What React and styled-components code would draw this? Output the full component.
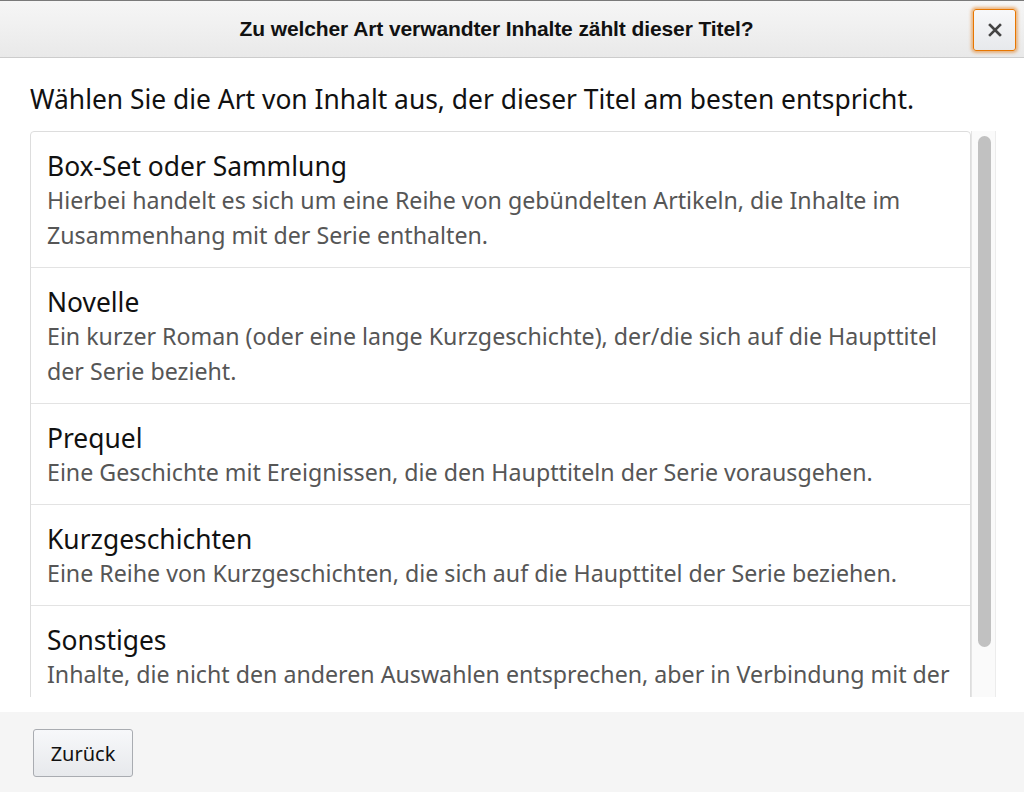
import React from "react";
import styled, { createGlobalStyle } from "styled-components";

const Global = createGlobalStyle`
  html, body { margin: 0; padding: 0; background: #fff; }
  body { font-family: "Noto Sans", "Liberation Sans", sans-serif; color: #111; }
  * { box-sizing: border-box; }
`;

const Page = styled.div`
  height: 792px;
  display: flex;
  flex-direction: column;
  background: #fff;
`;

const Header = styled.header`
  height: 58px;
  flex: none;
  display: flex;
  align-items: center;
  padding: 0 8px 0 20px;
  background: linear-gradient(#f6f6f6, #e9e9e9);
  border-top: 1px solid #7a7a7a;
  border-bottom: 1px solid #cccccc;
`;

const HeaderTitle = styled.h1`
  flex: 1;
  margin: 0;
  text-align: center;
  font-family: "Liberation Sans", Arial, sans-serif;
  font-weight: 700;
  font-size: 21px;
  letter-spacing: -0.1px;
  color: #111;
`;

const CloseButton = styled.button`
  width: 43px;
  height: 42px;
  margin-top: 2px;
  border: 1px solid #e77600;
  border-radius: 3px;
  background: linear-gradient(#f7f8fa, #e7e9ec);
  box-shadow: 0 0 3px 2px rgba(228, 121, 17, 0.5);
  display: flex;
  align-items: center;
  justify-content: center;
  padding: 0;
  cursor: pointer;
`;

const Main = styled.main`
  flex: 1;
  min-height: 0;
  display: flex;
  flex-direction: column;
  padding: 24px 28px 15px 30px;
`;

const Prompt = styled.p`
  margin: 0 0 15px;
  font-size: 26.4px;
  line-height: 34px;
  color: #111;
`;

const ScrollArea = styled.div`
  flex: 1;
  min-height: 0;
  display: flex;
`;

const Viewport = styled.div`
  flex: 1;
  min-width: 0;
  overflow: hidden;
`;

const Track = styled.div`
  width: 25px;
  flex: none;
  background: #fafafa;
  border-left: 1px solid #e4e4e4;
  border-right: 1px solid #ececec;
  padding: 5px 4px 0 6px;
`;

const Thumb = styled.div`
  height: 511px;
  border-radius: 7px;
  background: #c1c1c1;
`;

const List = styled.ul`
  list-style: none;
  margin: 0;
  padding: 0;
  border: 1px solid #dddddd;
  border-radius: 4px 4px 0 0;
`;

const Item = styled.li`
  padding: 17px 16px 14px;
  border-top: ${(p) => (p.$first ? "none" : "1px solid #e3e3e3")};
  cursor: pointer;
`;

const ItemTitle = styled.div`
  font-size: 26.4px;
  line-height: 34px;
  color: #111;
`;

const ItemText = styled.div`
  font-size: 23.2px;
  line-height: 35px;
  color: #565656;
`;

const Footer = styled.footer`
  height: 80px;
  flex: none;
  background: #f5f5f5;
  padding: 17px 33px;
`;

const BackButton = styled.button`
  width: 100px;
  height: 48px;
  border: 1px solid #a9acb1;
  border-radius: 3px;
  background: linear-gradient(#f7f8fa, #e7e9ec);
  font-family: "Noto Sans", sans-serif;
  font-size: 20px;
  color: #111;
  cursor: pointer;
  padding: 0;
`;

const items = [
  {
    title: "Box-Set oder Sammlung",
    text: "Hierbei handelt es sich um eine Reihe von gebündelten Artikeln, die Inhalte im Zusammenhang mit der Serie enthalten.",
  },
  {
    title: "Novelle",
    text: "Ein kurzer Roman (oder eine lange Kurzgeschichte), der/die sich auf die Haupttitel der Serie bezieht.",
  },
  {
    title: "Prequel",
    text: "Eine Geschichte mit Ereignissen, die den Haupttiteln der Serie vorausgehen.",
  },
  {
    title: "Kurzgeschichten",
    text: "Eine Reihe von Kurzgeschichten, die sich auf die Haupttitel der Serie beziehen.",
  },
  {
    title: "Sonstiges",
    text: "Inhalte, die nicht den anderen Auswahlen entsprechen, aber in Verbindung mit der Serie stehen.",
  },
];

export default function App() {
  return (
    <>
      <Global />
      <Page>
        <Header>
          <HeaderTitle>Zu welcher Art verwandter Inhalte zählt dieser Titel?</HeaderTitle>
          <CloseButton aria-label="Schließen">
            <svg width="14" height="14" viewBox="0 0 14 14">
              <path d="M2 2L12 12M12 2L2 12" stroke="#444" strokeWidth="2.6" strokeLinecap="square" />
            </svg>
          </CloseButton>
        </Header>
        <Main>
          <Prompt>Wählen Sie die Art von Inhalt aus, der dieser Titel am besten entspricht.</Prompt>
          <ScrollArea>
            <Viewport>
              <List>
                {items.map((it, i) => (
                  <Item key={it.title} $first={i === 0}>
                    <ItemTitle>{it.title}</ItemTitle>
                    <ItemText>{it.text}</ItemText>
                  </Item>
                ))}
              </List>
            </Viewport>
            <Track>
              <Thumb />
            </Track>
          </ScrollArea>
        </Main>
        <Footer>
          <BackButton>Zurück</BackButton>
        </Footer>
      </Page>
    </>
  );
}
